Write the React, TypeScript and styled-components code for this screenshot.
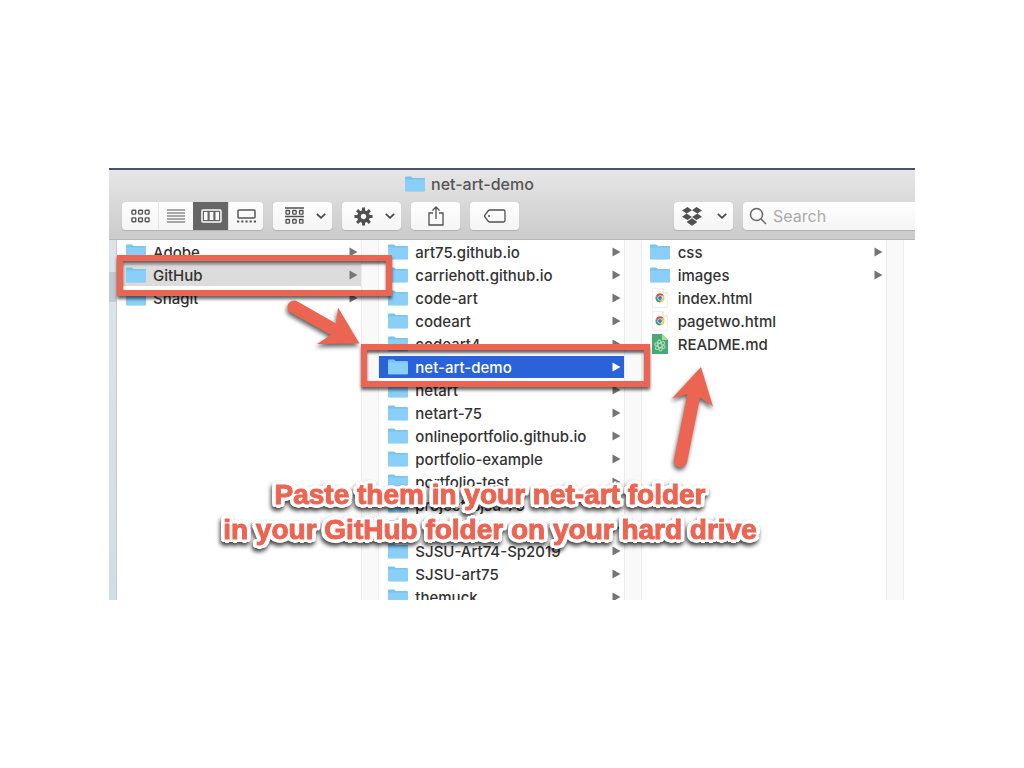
import React from "react";
import styled, { createGlobalStyle } from "styled-components";

const GlobalStyle = createGlobalStyle`
  * { box-sizing: border-box; }
  body { margin: 0; background: #fff; font-family: Inter, "Liberation Sans", sans-serif; }
`;

const Page = styled.main`
  padding: 168px 109px;
`;

const Stage = styled.div`
  position: relative;
`;

const Finder = styled.section`
  overflow: hidden;
  background: #fff;
`;

const Header = styled.header`
  display: flex;
  flex-direction: column;
  height: 72px;
  border-top: 2px solid #48526e;
  border-bottom: 1px solid #b8b8b8;
  background: linear-gradient(#e7e6e7, #cbcbcb);
`;

const Title = styled.h1`
  display: flex;
  align-items: center;
  gap: 6px;
  height: 28px;
  margin: 0;
  padding-left: 296px;
  font-size: 16px;
  font-weight: 500;
  color: #555;
`;

const Toolbar = styled.div`
  display: flex;
  gap: 10px;
  height: 28px;
  margin-top: 4px;
  padding-left: 13px;
`;

const Group = styled.div`
  display: flex;
  flex-shrink: 0;
  border-radius: 4px;
  overflow: hidden;
  box-shadow: 0 1px 1px #b2b2b2;
`;

const ViewButton = styled.button<{ $active?: boolean }>`
  display: grid;
  place-items: center;
  width: 35px;
  padding: 0;
  border: 0;
  border-left: 1px solid ${(p) => (p.$active ? "#666" : "#e4e4e4")};
  background: ${(p) => (p.$active ? "#666" : "linear-gradient(#fefefe, #f5f5f5)")};
  color: #565656;
  &:first-child { width: 36px; border-left: 0; }
`;

const ToolButton = styled.button<{ $menu?: boolean; $wideIcon?: boolean }>`
  display: flex;
  flex-shrink: 0;
  align-items: center;
  justify-content: ${(p) => (p.$menu ? "space-between" : "center")};
  width: ${(p) => (p.$menu ? 59 : 49)}px;
  padding: ${(p) => (p.$menu ? `0 6px 0 ${p.$wideIcon ? 8 : 12}px` : "0")};
  border: 0;
  border-radius: 4px;
  background: linear-gradient(#fefefe, #f5f5f5);
  box-shadow: 0 1px 1px #b2b2b2;
  color: #505050;
`;

const Trailing = styled.div`
  display: flex;
  flex: 0 0 241px;
  gap: 10px;
  margin-left: auto;
`;

const SearchField = styled.label`
  display: flex;
  flex: 1;
  align-items: center;
  gap: 6px;
  min-width: 0;
  padding-left: 6px;
  border-radius: 4px 0 0 4px;
  background: linear-gradient(#fefefe, #f5f5f5);
  box-shadow: 0 1px 1px #b2b2b2;
  color: #666;
`;

const SearchInput = styled.input`
  flex: 1;
  width: 0;
  min-width: 0;
  padding: 0;
  border: 0;
  outline: 0;
  background: transparent;
  font: 400 16px Inter, sans-serif;
  color: #333;
  &::placeholder { color: #aaa; opacity: 1; }
`;

const Browser = styled.div`
  display: flex;
  height: 360px;
`;

const SidebarEdge = styled.div`
  width: 8px;
  padding-top: 32px;
  border-right: 1px solid #c5cbd0;
  background: linear-gradient(#dfe3e8, #d9e0e5 60%, #cfdfe3);
`;

const SidebarSelection = styled.div`
  height: 30px;
  background: #c5c9d3;
`;

const Column = styled.ul`
  flex: 1 1 0;
  min-width: 0;
  margin: 0;
  padding: 1px 0 0;
  list-style: none;
`;

const Gutter = styled.div`
  width: 18px;
  border-left: 1px solid #ebebeb;
  border-right: 1px solid #ededed;
  background: #f9f9f9;
`;

const Rest = styled.div`
  width: 11px;
`;

const rowColors = { path: "#dcdcdc", selected: "#2962d9" };

const Row = styled.li<{ $state?: "path" | "selected" }>`
  display: flex;
  align-items: center;
  height: 23px;
  padding: 0 3px 0 8px;
  border-bottom: 1px solid #fff;
  background: ${(p) => (p.$state ? rowColors[p.$state] : "transparent")};
  color: ${(p) => (p.$state === "selected" ? "#fff" : "#333")};
`;

const IconSlot = styled.span`
  display: flex;
  justify-content: center;
  width: 21px;
  margin-right: 7px;
`;

const Name = styled.span`
  flex: 1;
  padding-top: 2px;
  font-size: 15px;
  font-weight: 500;
  line-height: 20px;
  white-space: nowrap;
`;

const Disclosure = styled.svg<{ $light?: boolean }>`
  fill: ${(p) => (p.$light ? "#fff" : "#757575")};
`;

const Highlight = styled.div<{ $x: number; $y: number; $w: number; $h: number }>`
  position: absolute;
  left: ${(p) => p.$x}px;
  top: ${(p) => p.$y}px;
  width: ${(p) => p.$w}px;
  height: ${(p) => p.$h}px;
  border: 6px solid #ec6452;
  box-shadow: 0 3px 3px rgba(0, 0, 0, 0.6), inset 0 3px 3px rgba(0, 0, 0, 0.6);
`;

const Arrows = styled.svg`
  position: absolute;
  left: 0;
  top: 0;
  pointer-events: none;
  filter: drop-shadow(-1px 3px 2px rgba(0, 0, 0, 0.6));
`;

const Caption = styled.p`
  position: absolute;
  left: 81px;
  top: 309px;
  width: 600px;
  margin: 0;
  font: 700 28px/35px "Liberation Sans", Arial, sans-serif;
  text-align: center;
  color: #ec6452;
  -webkit-text-stroke: 1px #ec6452;
  text-shadow: 4px 0 #fff, -4px 0 #fff, 0 4px #fff, 0 -4px #fff,
    3px 3px #fff, -3px 3px #fff, 3px -3px #fff, -3px -3px #fff,
    4px 2px #fff, -4px 2px #fff, 4px -2px #fff, -4px -2px #fff,
    2px 2px #fff, -2px 2px #fff, 2px -2px #fff, -2px -2px #fff;
  filter: drop-shadow(-1px 3px 2px rgba(0, 0, 0, 0.75));
`;

const FolderIcon = () => (
  <svg width="20" height="16" viewBox="0 0 20 16" aria-hidden="true">
    <path d="M0 1.500Q0 .5 1 .5H5.500Q6.500.5 7 1.200L7.600 2H19Q20 2 20 3V14.500Q20 15.500 19 15.500H1Q0 15.500 0 14.500Z" fill="#78c4ef" />
    <path d="M0 3.500H20V14.300Q20 15 19 15H1Q0 15 0 14.300Z" fill="#8acff8" />
  </svg>
);

const ChromeFileIcon = () => (
  <svg width="16" height="20" viewBox="0 0 16 20" aria-hidden="true">
    <path d="M.5 .5H11L15.500 5V19.500H.5Z" fill="#fff" stroke="#f0f0f0" />
    <path d="M11 .5V5H15.500" fill="none" stroke="#dcdcdc" />
    <path d="M4 7.700A4.600 4.600 0 0 1 12 7.700H8L6 11.200Z" fill="#d9503f" />
    <path d="M12 7.700A4.600 4.600 0 0 1 8 14.600L10 11.200 8 7.700Z" fill="#f8c945" />
    <path d="M4 7.700A4.600 4.600 0 0 0 8 14.600L10 11.200H6Z" fill="#3f9f5a" />
    <circle cx="8" cy="10" r="2.500" fill="#fff" />
    <circle cx="8" cy="10" r="2" fill="#3f78dc" />
  </svg>
);

const MarkdownFileIcon = () => (
  <svg width="16" height="20" viewBox="0 0 16 20" aria-hidden="true">
    <path d="M0 0H10L16 6V20H0Z" fill="#4aa873" />
    <path d="M10 0V6H16Z" fill="#a5df91" />
    <g fill="none" stroke="#b4e0c3" strokeWidth="1">
      <ellipse cx="8" cy="11.500" rx="5.500" ry="2" transform="rotate(20 8 11.500)" />
      <ellipse cx="8" cy="11.500" rx="5.500" ry="2" transform="rotate(80 8 11.500)" />
      <ellipse cx="8" cy="11.500" rx="5.500" ry="2" transform="rotate(140 8 11.500)" />
    </g>
  </svg>
);

const Chevron = () => (
  <svg width="10" height="6" viewBox="0 0 10 6" fill="none" stroke="#4a4a4a" strokeWidth="1.800" aria-hidden="true">
    <path d="M.8.8 5 4.800 9.200.8" />
  </svg>
);

const GridGlyph = () => (
  <svg width="19" height="14" viewBox="0 0 20 14" fill="none" stroke="currentColor" strokeWidth="1.500" aria-hidden="true">
    {[1, 8, 15].map((x) => [1, 9].map((y) => <rect key={`${x}-${y}`} x={x} y={y} width="4" height="4" rx=".8" />))}
  </svg>
);

const ListGlyph = () => (
  <svg width="18" height="14" viewBox="0 0 18 14" stroke="currentColor" strokeWidth="1.200" aria-hidden="true">
    <path d="M0 1H18M0 4H18M0 7H18M0 10H18M0 13H18" />
  </svg>
);

const ColumnsGlyph = () => (
  <svg width="21" height="14" viewBox="0 0 21 14" aria-hidden="true">
    <rect x="1" y="1" width="19" height="12" rx="1" fill="none" stroke="#fff" strokeWidth="1.500" />
    <path d="M3 3H6.500V11H3ZM8.700 3H12.300V11H8.700ZM14.500 3H18V11H14.500Z" fill="#fff" />
  </svg>
);

const GalleryGlyph = () => (
  <svg width="19" height="14" viewBox="0 0 19 14" aria-hidden="true">
    <rect x="1" y="1" width="17" height="8" rx="1" fill="none" stroke="currentColor" strokeWidth="1.500" />
    <path d="M0 12.500H19" stroke="currentColor" strokeWidth="2" strokeDasharray="2.200 2" />
  </svg>
);

const ArrangeGlyph = () => (
  <svg width="19" height="18" viewBox="0 0 19 18" fill="none" stroke="currentColor" strokeWidth="1.300" aria-hidden="true">
    <path d="M0 1H19M0 9.500H19" />
    {[1, 7.700, 14.500].map((x) => [3.500, 12.500].map((y) => <rect key={`${x}-${y}`} x={x} y={y} width="3.500" height="3.600" rx=".6" />))}
  </svg>
);

const GearGlyph = () => (
  <svg width="19" height="19" viewBox="-10 -10 20 20" aria-hidden="true">
    {[0, 45, 90, 135].map((a) => (
      <path key={a} d="M0-9.500V-4M0 4V9.500" stroke="currentColor" strokeWidth="3.200" transform={`rotate(${a})`} />
    ))}
    <circle r="4.800" fill="none" stroke="currentColor" strokeWidth="3.800" />
  </svg>
);

const ShareGlyph = () => (
  <svg width="16" height="20" viewBox="0 0 16 20" fill="none" stroke="currentColor" strokeWidth="1.300" aria-hidden="true">
    <path d="M5 7H1V19H15V7H11M8 13V1M4.500 4.500 8 1 11.500 4.500" />
  </svg>
);

const TagGlyph = () => (
  <svg width="22" height="14" viewBox="0 0 22 14" fill="none" stroke="currentColor" strokeWidth="1.300" aria-hidden="true">
    <path d="M6 1H19.500Q21 1 21 2.500V11.500Q21 13 19.500 13H6Q5 13 4 12L.9 8Q.4 7 .9 6L4 2Q5 1 6 1Z" />
    <circle cx="5" cy="7" r="1" fill="currentColor" stroke="none" />
  </svg>
);

const DropboxGlyph = () => (
  <svg width="20" height="19" viewBox="0 0 20 19" fill="currentColor" aria-hidden="true">
    <path d="M5.500 0 10 3.200 4.600 6.500 0 3.400ZM14.500 0 20 3.400 15.400 6.500 10 3.200ZM4.600 6.500 10 9.900 5.500 13 0 9.800ZM15.400 6.500 20 9.800 14.500 13 10 9.900ZM10 11.200 14.800 14.500V15.600L10 18.800 5.200 15.600V14.500Z" />
  </svg>
);

const SearchGlyph = () => (
  <svg width="18" height="18" viewBox="0 0 18 18" fill="none" stroke="currentColor" strokeWidth="1.500" aria-hidden="true">
    <circle cx="7.500" cy="7.500" r="6" />
    <path d="M12 12 17 17" />
  </svg>
);

type Kind = "folder" | "html" | "md";
interface Entry {
  name: string;
  kind?: Kind;
  state?: "path" | "selected";
}

const root: Entry[] = [{ name: "Adobe" }, { name: "GitHub", state: "path" }, { name: "Snagit" }];

const repos: Entry[] = [
  { name: "art75.github.io" },
  { name: "carriehott.github.io" },
  { name: "code-art" },
  { name: "codeart" },
  { name: "codeart4" },
  { name: "net-art-demo", state: "selected" },
  { name: "netart" },
  { name: "netart-75" },
  { name: "onlineportfolio.github.io" },
  { name: "portfolio-example" },
  { name: "portfolio-test" },
  { name: "project-sjsu-75" },
  { name: "" },
  { name: "SJSU-Art74-Sp2019" },
  { name: "SJSU-art75" },
  { name: "themuck" },
];

const files: Entry[] = [
  { name: "css" },
  { name: "images" },
  { name: "index.html", kind: "html" },
  { name: "pagetwo.html", kind: "html" },
  { name: "README.md", kind: "md" },
];

const icons: Record<Kind, React.ReactNode> = {
  folder: <FolderIcon />,
  html: <ChromeFileIcon />,
  md: <MarkdownFileIcon />,
};

const FileColumn = ({ entries }: { entries: Entry[] }) => (
  <Column>
    {entries.map(({ name, kind = "folder", state }) => (
      <Row key={name} $state={state}>
        <IconSlot>{icons[kind]}</IconSlot>
        <Name>{name}</Name>
        {kind === "folder" && (
          <Disclosure width="9" height="10" viewBox="0 0 9 10" $light={state === "selected"} aria-hidden="true">
            <path d="M.5.5 8.500 5 .5 9.500Z" />
          </Disclosure>
        )}
      </Row>
    ))}
  </Column>
);

export default function App() {
  return (
    <Page>
      <GlobalStyle />
      <Stage>
        <Finder>
          <Header>
            <Title>
              <FolderIcon />
              net-art-demo
            </Title>
            <Toolbar>
              <Group>
                <ViewButton aria-label="Icon view"><GridGlyph /></ViewButton>
                <ViewButton aria-label="List view"><ListGlyph /></ViewButton>
                <ViewButton aria-label="Column view" $active><ColumnsGlyph /></ViewButton>
                <ViewButton aria-label="Gallery view"><GalleryGlyph /></ViewButton>
              </Group>
              <ToolButton $menu aria-label="Arrange"><ArrangeGlyph /><Chevron /></ToolButton>
              <ToolButton $menu aria-label="Actions"><GearGlyph /><Chevron /></ToolButton>
              <ToolButton aria-label="Share"><ShareGlyph /></ToolButton>
              <ToolButton aria-label="Tags"><TagGlyph /></ToolButton>
              <Trailing>
                <ToolButton $menu $wideIcon aria-label="Dropbox"><DropboxGlyph /><Chevron /></ToolButton>
                <SearchField>
                  <SearchGlyph />
                  <SearchInput type="search" placeholder="Search" aria-label="Search" />
                </SearchField>
              </Trailing>
            </Toolbar>
          </Header>
          <Browser>
            <SidebarEdge><SidebarSelection /></SidebarEdge>
            <FileColumn entries={root} />
            <Gutter />
            <FileColumn entries={repos} />
            <Gutter />
            <FileColumn entries={files} />
            <Gutter />
            <Rest />
          </Browser>
        </Finder>
        <Highlight $x={8} $y={87} $w={275} $h={41} />
        <Highlight $x={252} $y={176} $w={289} $h={43} />
        <Arrows width="805" height="432" viewBox="0 0 805 432" aria-hidden="true">
          <g fill="#ec6452">
            <path d="M188.500 133.500 227 155.500 229 139.500 250.500 175.500 208 176 222 167 181.500 144.500A6.500 6.500 0 0 1 188.500 133.500Z" />
            <path d="M592 199 604 238.500 591 229.500 578 294A6.600 6.600 0 0 1 565 291.500L578.500 226 563 230.500Z" />
          </g>
        </Arrows>
        <Caption>
          Paste them in your net-art folder
          <br />
          in your GitHub folder on your hard drive
        </Caption>
      </Stage>
    </Page>
  );
}
